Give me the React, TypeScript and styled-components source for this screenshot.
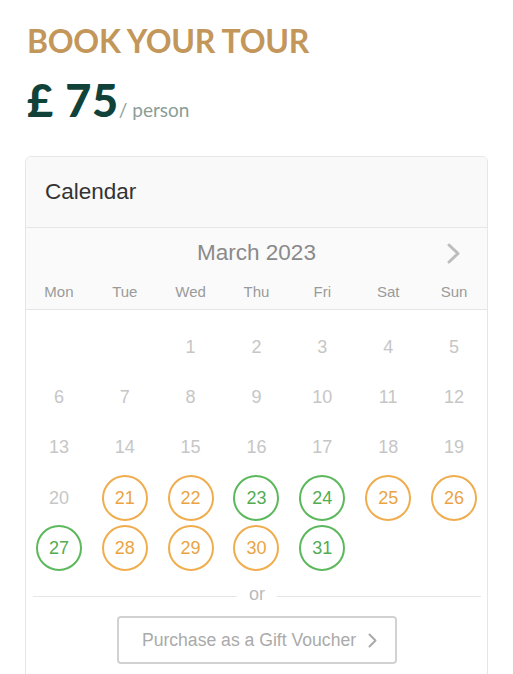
import React from "react";
import styled, { createGlobalStyle } from "styled-components";

const GlobalStyle = createGlobalStyle`
  html, body { margin: 0; padding: 0; background: #ffffff; }
  body { font-family: "Liberation Sans", Arial, sans-serif; }
  * { box-sizing: border-box; }
`;

const Page = styled.div`
  padding: 25px 26px 0 25px;
  width: 513px;
`;

const Title = styled.h1`
  margin: 0;
  font-family: "Lato", sans-serif;
  font-weight: 700;
  font-size: 32px;
  line-height: 32px;
  letter-spacing: -0.3px;
  color: #c3965a;
  padding-left: 2px;
`;

const PriceRow = styled.div`
  margin-top: 21px;
  display: flex;
  align-items: baseline;
  padding-left: 2px;
  height: 44px;
`;

const Price = styled.span`
  font-family: "Lato", sans-serif;
  font-weight: 900;
  font-size: 45px;
  line-height: 44px;
  letter-spacing: 0.7px;
  color: #10423a;
`;

const PerPerson = styled.span`
  font-family: "Lato", sans-serif;
  font-size: 19px;
  color: #8a9e96;
  margin-left: 0;
`;

const Card = styled.div`
  margin-top: 34px;
  width: 463px;
  border: 1px solid #e6e6e6;
  border-radius: 6px;
  overflow: hidden;
  padding-bottom: 20px;
`;

const CardHeader = styled.div`
  height: 71px;
  background: #f9f9f9;
  border-bottom: 1px solid #e6e6e6;
  display: flex;
  align-items: center;
  padding-left: 19px;
  font-size: 22.5px;
  color: #333333;
`;

const MonthSection = styled.div`
  background: #fafafa;
  border-bottom: 1px solid #e6e6e6;
  height: 82px;
  display: flex;
  flex-direction: column;
`;

const MonthRow = styled.div`
  position: relative;
  height: 50px;
  display: flex;
  align-items: center;
  justify-content: center;
  font-size: 22.5px;
  color: #8a8a8a;
`;

const NextButton = styled.button`
  position: absolute;
  right: 24px;
  top: 13px;
  width: 20px;
  height: 24px;
  border: 0;
  padding: 0;
  background: transparent;
  display: flex;
  align-items: center;
  justify-content: center;
`;

const Grid = styled.div`
  display: grid;
  grid-template-columns: repeat(7, 1fr);
`;

const Weekday = styled.div`
  text-align: center;
  font-size: 15px;
  color: #9a9a9a;
  line-height: 28px;
`;

const DaysGrid = styled(Grid)`
  padding-top: 12px;
  grid-auto-rows: 50.3px;
`;

const DayCell = styled.div`
  display: flex;
  align-items: center;
  justify-content: center;
`;

type Status = "past" | "limited" | "available";

const Day = styled.div<{ $status: Status }>`
  width: 46px;
  height: 46px;
  border-radius: 50%;
  display: flex;
  align-items: center;
  justify-content: center;
  font-size: 18px;
  color: ${(p) =>
    p.$status === "past" ? "#c6c6c6" : p.$status === "limited" ? "#eba444" : "#52ac52"};
  border: 2px solid
    ${(p) =>
      p.$status === "past" ? "transparent" : p.$status === "limited" ? "#f0ad4e" : "#5cb85c"};
`;

const Divider = styled.div`
  margin: 10px 6px 0 7px;
  display: flex;
  align-items: center;
  gap: 12px;
  font-size: 18px;
  color: #bbbbbb;
  height: 22px;
  &::before,
  &::after {
    content: "";
    flex: 1;
    height: 1px;
    background: #e6e6e6;
    margin-top: 4px;
  }
`;

const VoucherButton = styled.button`
  display: flex;
  align-items: center;
  justify-content: center;
  gap: 12px;
  margin: 11px auto 0;
  width: 280px;
  height: 48px;
  border: 2px solid #d2d2d2;
  border-radius: 4px;
  background: #ffffff;
  font-family: "Liberation Sans", Arial, sans-serif;
  font-size: 17.6px;
  color: #aaaaaa;
  padding: 0 0 0 6px;
`;

const weekdays = ["Mon", "Tue", "Wed", "Thu", "Fri", "Sat", "Sun"];

const limited = new Set([21, 22, 25, 26, 28, 29, 30]);
const available = new Set([23, 24, 27, 31]);

const statusOf = (d: number): Status =>
  limited.has(d) ? "limited" : available.has(d) ? "available" : "past";

const Chevron: React.FC<{ w: number; h: number; stroke: number; color: string }> = ({
  w,
  h,
  stroke,
  color,
}) => (
  <svg width={w} height={h} viewBox={`0 0 ${w} ${h}`} fill="none">
    <path
      d={`M${stroke / 2 + 0.5} ${stroke / 2 + 0.5} L${w - stroke / 2 - 0.5} ${h / 2} L${
        stroke / 2 + 0.5
      } ${h - stroke / 2 - 0.5}`}
      stroke={color}
      strokeWidth={stroke}
      strokeLinecap="round"
      strokeLinejoin="round"
    />
  </svg>
);

export default function App() {
  const cells: (number | null)[] = [null, null];
  for (let d = 1; d <= 31; d++) cells.push(d);

  return (
    <>
      <GlobalStyle />
      <Page>
        <Title>BOOK YOUR TOUR</Title>
        <PriceRow>
          <Price>£ 75</Price>
          <PerPerson>/ person</PerPerson>
        </PriceRow>
        <Card>
          <CardHeader>Calendar</CardHeader>
          <MonthSection>
            <MonthRow>
              March 2023
              <NextButton aria-label="Next month">
                <Chevron w={13} h={21} stroke={3} color="#bdbdbd" />
              </NextButton>
            </MonthRow>
            <Grid>
              {weekdays.map((w) => (
                <Weekday key={w}>{w}</Weekday>
              ))}
            </Grid>
          </MonthSection>
          <DaysGrid>
            {cells.map((d, i) => (
              <DayCell key={i}>
                {d !== null && <Day $status={statusOf(d)}>{d}</Day>}
              </DayCell>
            ))}
          </DaysGrid>
          <Divider>or</Divider>
          <VoucherButton>
            Purchase as a Gift Voucher
            <Chevron w={9} h={15} stroke={2} color="#aaaaaa" />
          </VoucherButton>
        </Card>
      </Page>
    </>
  );
}
